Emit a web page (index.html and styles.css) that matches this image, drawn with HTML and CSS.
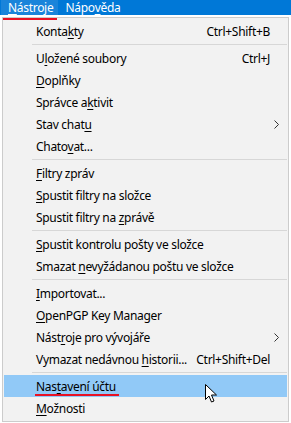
FILE: index.html
```html
<!DOCTYPE html>
<html>
<head>
  <meta charset="utf-8">
  <title>Nástroje</title>
  <link rel="stylesheet" href="styles.css">
</head>
<body>
  <div class="menubar">
    <span class="mb-item open"><u>N</u>ástroje</span>
    <span class="mb-item">Nápo<u>v</u>ěda</span>
  </div>
  <div class="mark mark-top"></div>

  <div class="menu">
    <div class="item"><span class="label">Konta<u>k</u>ty</span><span class="key">Ctrl+Shift+B</span><span class="sub"></span></div>
    <div class="sep"></div>
    <div class="item"><span class="label">U<u>l</u>ožené soubory</span><span class="key">Ctrl+J</span><span class="sub"></span></div>
    <div class="item"><span class="label"><u>D</u>oplňky</span><span class="sub"></span></div>
    <div class="item"><span class="label">Správce a<u>k</u>tivit</span><span class="sub"></span></div>
    <div class="item"><span class="label">Stav chat<u>u</u></span><span class="sub"><svg width="5" height="9" viewBox="0 0 5 9"><path d="M0.5 0.5 L4.5 4.5 L0.5 8.5" fill="none" stroke="#333" stroke-width="1"/></svg></span></div>
    <div class="item"><span class="label">Chato<u>v</u>at...</span><span class="sub"></span></div>
    <div class="sep"></div>
    <div class="item"><span class="label"><u>F</u>iltry zpráv</span><span class="sub"></span></div>
    <div class="item"><span class="label"><u>S</u>pustit filtry na složce</span><span class="sub"></span></div>
    <div class="item"><span class="label">Spustit filtry na <u>z</u>právě</span><span class="sub"></span></div>
    <div class="sep"></div>
    <div class="item"><span class="label"><u>S</u>pustit kontrolu pošty ve složce</span><span class="sub"></span></div>
    <div class="item"><span class="label">Smazat <u>n</u>evyžádanou poštu ve složce</span><span class="sub"></span></div>
    <div class="sep"></div>
    <div class="item"><span class="label"><u>I</u>mportovat...</span><span class="sub"></span></div>
    <div class="item"><span class="label"><u>O</u>penPGP Key Manager</span><span class="sub"></span></div>
    <div class="item"><span class="label">Nást<u>r</u>oje pro vývojáře</span><span class="sub"><svg width="5" height="9" viewBox="0 0 5 9"><path d="M0.5 0.5 L4.5 4.5 L0.5 8.5" fill="none" stroke="#333" stroke-width="1"/></svg></span></div>
    <div class="item"><span class="label">Vymazat nedávnou <u>h</u>istorii...</span><span class="key">Ctrl+Shift+Del</span><span class="sub"></span></div>
    <div class="sep"></div>
    <div class="item hover"><span class="label">Nas<u>t</u>avení účtu</span><span class="sub"></span><span class="mark mark-item"></span></div>
    <div class="item"><span class="label"><u>M</u>ožnosti</span><span class="sub"></span></div>
  </div>

  <svg class="cursor" width="13" height="19" viewBox="0 0 13 19">
    <path d="M0.5 0.5 L0.5 15.5 L4 12 L6.5 18 L9 17 L6.5 11 L11.5 11 Z" fill="#fff" stroke="#000" stroke-width="1" stroke-linejoin="miter"/>
  </svg>
</body>
</html>
```

FILE: styles.css
```css
html, body{
  margin: 0;
  padding: 0;
}
body{
  position: relative;
  width: 291px;
  height: 423px;
  overflow: hidden;
  background: #fff;
  font-family: "Noto Sans", "Liberation Sans", sans-serif;
  font-size: 12px;
  letter-spacing: -0.3px;
  color: #000;
}
u{
  text-decoration: underline;
  text-underline-offset: 2px;
  text-decoration-thickness: 1px;
}
.menubar{
  display: flex;
  height: 15px;
  background: #0078d7;
  color: #fff;
  padding-left: 1px;
}
.mb-item{
  display: flex;
  align-items: center;
  padding: 0 5px 0 7px;
  line-height: 15px;
}
.mb-item.open{
  background: #1a84da;
}
.menu{
  margin: 2px 0 0 2px;
  width: 283px;
  padding: 2px 1px;
  background: #f2f2f2;
  border: 1px solid #cccccc;
}
.item{
  position: relative;
  display: flex;
  align-items: center;
  height: 22px;
  padding-left: 32px;
  white-space: nowrap;
}
.item .label{
  flex: 1;
}
.item .key{
  flex: none;
}
.item .sub{
  flex: none;
  display: flex;
  align-items: center;
  width: 17px;
  padding-left: 4px;
  box-sizing: border-box;
}
.item.hover{
  background: #91c9f7;
}
.sep{
  height: 1px;
  margin: 2px 0 2px 28px;
  background: #d7d7d7;
}
.mark{
  position: absolute;
  height: 2px;
  background: #e81123;
}
.mark-top{
  left: 3px;
  top: 18px;
  width: 54px;
}
.mark-item{
  left: 31px;
  top: 19px;
  width: 84px;
}
.cursor{
  position: absolute;
  left: 205px;
  top: 384px;
}
```
